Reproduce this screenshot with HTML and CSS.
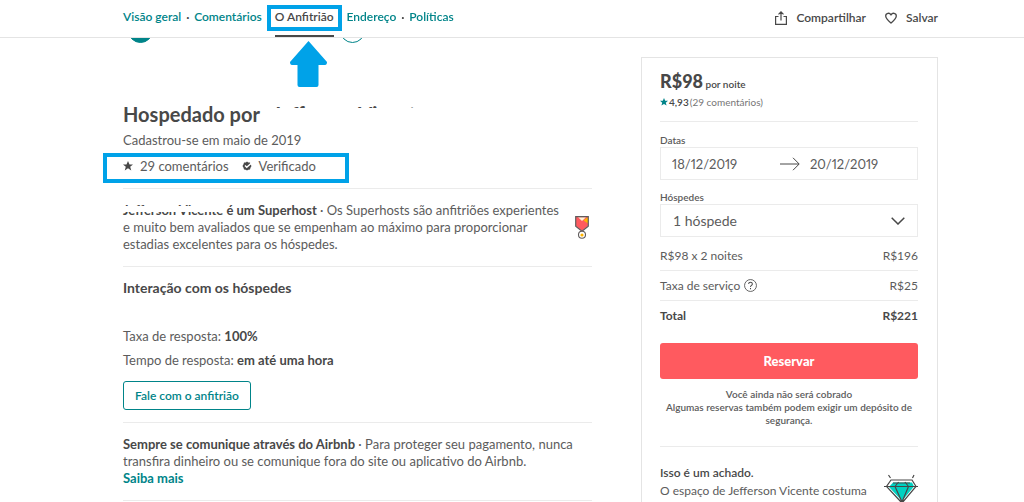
FILE: index.html
```html
<!DOCTYPE html>
<html lang="pt-BR">
<head>
<meta charset="UTF-8">
<meta name="viewport" content="width=device-width,initial-scale=1.0">
<title>O Anfitrião</title>
<link rel="stylesheet" href="styles.css">
</head>
<body>

<header class="topbar">
  <nav>
    <ul class="nav">
      <li><a href="#geral">Visão geral</a></li>
      <li><a href="#comentarios">Comentários</a></li>
      <li class="active">
        <a href="#anfitriao">O Anfitrião</a>
        <svg class="arrow" viewBox="0 0 37 46" width="37" height="46"><path d="M18.500 0L37 21q0 3-2 3h-6.500v20q0 2-2 2h-17q-2 0-2-2V24H2q-2 0-2-3z" fill="#00a2e8"/></svg>
      </li>
      <li><a href="#endereco">Endereço</a></li>
      <li><a href="#politicas">Políticas</a></li>
    </ul>
  </nav>
  <div class="actions">
    <button type="button">
      <svg viewBox="0 0 12 14" width="12" height="14" fill="none" stroke="#484848" stroke-width="1.200"><path d="M3.500 5.500H.6v7.900h10.800V5.500H8.500M6 9.500V1M3.500 3.400L6 .9l2.500 2.500"/></svg>
      Compartilhar
    </button>
    <button type="button">
      <svg viewBox="0 0 12 12" width="12" height="12" fill="none" stroke="#484848" stroke-width="1.300" stroke-linejoin="round"><path d="M6 11C3.500 9 .7 6.800.7 4.100.7 1 4.600.200 6 3 7.400.200 11.300 1 11.300 4.100 11.300 6.800 8.500 9 6 11z"/></svg>
      Salvar
    </button>
  </div>
</header>

<div class="page">
  <main class="main">
    <div class="pager">
      <span class="dot full"></span>
      <span class="dot"></span>
    </div>

    <section class="host" id="anfitriao">
      <h2>Hospedado por <span class="name">Jefferson Vicente</span></h2>
      <p class="since">Cadastrou-se em maio de 2019</p>
      <div class="badges">
        <span>
          <svg viewBox="0 0 20 20" width="10" height="10"><path d="M10 0l3 7h7l-5.600 4.700L16.500 19 10 14.700 3.500 19l2.100-7.300L0 7h7z" fill="#484848"/></svg>
          29 comentários
        </span>
        <span>
          <svg viewBox="0 0 20 20" width="10" height="10"><path d="M10 1l2.500 2L16 3l1 3.500L19 10l-2 3.500L16 17l-3.500.300L10 19l-2.500-1.700L4 17l-1-3.500L1 10l2-3.500L4 3l3.500 0z" fill="#484848"/><path d="M6 9l3.500 3.500L19 4" fill="none" stroke="#fff" stroke-width="2.800"/></svg>
          Verificado
        </span>
      </div>
    </section>

    <section class="superhost">
      <p><b><span class="name">Jefferson Vicente</span> é um Superhost</b> · Os Superhosts são anfitriões experientes e muito bem avaliados que se empenham ao máximo para proporcionar estadias excelentes para os hóspedes.</p>
      <svg viewBox="0 0 14 23" width="14" height="23">
        <path d="M1 1h12v9l-6 5-6-5z" fill="#ff5a5f"/>
        <path d="M13 1v6.500L8.500 4.500z" fill="#ffb400"/>
        <path d="M3 1.200h8L7 5z" fill="#fff3d6"/>
        <path d="M.7.7h12.600v9.500L7 15.200.7 10.200z" fill="none" stroke="#605b5b" stroke-width="1.200"/>
        <circle cx="7" cy="18.800" r="3.500" fill="#fff" stroke="#605b5b" stroke-width="1.100"/>
        <circle cx="7" cy="19" r="1.600" fill="#ffb400"/>
      </svg>
    </section>

    <section class="contact">
      <h3>Interação com os hóspedes</h3>
      <p>Taxa de resposta: <b>100%</b></p>
      <p>Tempo de resposta: <b>em até uma hora</b></p>
      <button type="button" class="btn-line">Fale com o anfitrião</button>
    </section>

    <section class="safety">
      <p><b>Sempre se comunique através do Airbnb</b> · Para proteger seu pagamento, nunca transfira dinheiro ou se comunique fora do site ou aplicativo do Airbnb.</p>
      <a href="#saiba-mais">Saiba mais</a>
    </section>
  </main>

  <aside class="card">
    <div class="price"><strong>R$98</strong> por noite</div>
    <div class="rating">
      <svg viewBox="0 0 20 20" width="8" height="8"><path d="M10 0l3 7h7l-5.600 4.700L16.500 19 10 14.700 3.500 19l2.100-7.300L0 7h7z" fill="#008489"/></svg>
      <b>4,93</b> <span>(29 comentários)</span>
    </div>

    <form class="booking">
      <label for="checkin">Datas</label>
      <div class="dates">
        <input type="text" id="checkin" value="18/12/2019">
        <svg viewBox="0 0 20 14" width="20" height="14" fill="none" stroke="#484848"><path d="M0 7h19M13 .8L19.200 7 13 13.200"/></svg>
        <input type="text" id="checkout" aria-label="Checkout" value="20/12/2019">
      </div>
      <label for="guests">Hóspedes</label>
      <div class="guests">
        <select id="guests"><option>1 hóspede</option></select>
        <svg viewBox="0 0 14 8" width="14" height="8" fill="none" stroke="#484848" stroke-width="1.500"><path d="M.7.7L7 7l6.300-6.300"/></svg>
      </div>

      <dl class="costs">
        <div><dt>R$98 x 2 noites</dt><dd>R$196</dd></div>
        <div>
          <dt>Taxa de serviço
            <svg viewBox="0 0 14 14" width="13" height="13" fill="none" stroke="#484848"><circle cx="7" cy="7" r="6.400" stroke-width=".9"/><path d="M5 5.500c0-2.600 4-2.600 4 0C9 7 7 6.900 7 8.600M7 9.800v1.200" stroke-width="1.100"/></svg>
          </dt>
          <dd>R$25</dd>
        </div>
        <div class="total"><dt>Total</dt><dd>R$221</dd></div>
      </dl>

      <button type="submit" class="btn-book">Reservar</button>
    </form>
    <p class="note">Você ainda não será cobrado<br>Algumas reservas também podem exigir um depósito de segurança.</p>

    <div class="find">
      <div>
        <b>Isso é um achado.</b>
        <p>O espaço de Jefferson Vicente costuma</p>
      </div>
      <svg viewBox="0 0 34 30" width="34" height="30">
        <path d="M7 6h21l4 6.500L18 29 2.500 12.500z" fill="#fff"/>
        <path d="M9 8.500h19l2 4L18 27 5 13z" fill="#00d1c1"/>
        <path d="M7 6h21l4 6.500L18 29 2.500 12.500zM0 12.500h34M11 12.500L18 28l6.500-15.500M11 12.500l3.500-4.500M24.500 12.500L21 8M9 9h17M6.500 4L4.500 1M28.500 4l1.500-3" fill="none" stroke="#484848" stroke-width="1.200"/>
      </svg>
    </div>
  </aside>
</div>

</body>
</html>
```
FILE: styles.css
```css
*, *:before, *:after{ margin: 0; padding: 0; box-sizing: border-box; }
body{ background: #fff; color: #5c5c5c; font: 13px/18px Lato, "Liberation Sans", sans-serif; }
a{ color: #008489; text-decoration: none; }
h2, h3, b, strong{ color: #484848; }
button, input, select{ font: inherit; color: inherit; background: none; border: 0; }
button{ cursor: pointer; }
svg{ display: block; flex: none; }

.topbar{
  position: fixed; top: 0; left: 0; right: 0; z-index: 2; height: 38px;
  display: flex; justify-content: space-between; padding: 0 86px 0 123px;
  background: #fff; border-bottom: 1px solid #e4e4e4; color: #484848;
  font-size: 12px; font-weight: 600;
}
.nav{ display: flex; list-style: none; line-height: 34px; }
.nav li{ position: relative; height: 37px; }
.nav li + li{ margin-left: 13px; }
.nav li + li:before{ content: "·"; position: absolute; left: -8px; }
.nav .active{ border-bottom: 2px solid #484848; }
.nav .active a{ color: #484848; }
/* destaque azul em volta do item */
.nav .active:after{ content: ""; position: absolute; top: 5px; left: -8px; right: -8px; height: 26px; border: 4px solid #00a2e8; pointer-events: none; }
.nav .active:before, .nav .active + li:before{ display: none; }
.arrow{ position: absolute; top: 41px; left: 50%; margin-left: -14px; }
.actions{ display: flex; gap: 19px; }
.actions button{ display: flex; align-items: center; gap: 9px; height: 35px; }

.page{ display: flex; align-items: flex-start; justify-content: space-between; gap: 49px; padding: 18px 86px 0 123px; }
.main{ flex: 1; min-width: 0; }
.pager{ display: flex; gap: 187px; padding-left: 5px; }
.dot{ width: 25px; height: 25px; border: 1px solid #008489; border-radius: 50%; }
.dot.full{ background: #008489; }

.main section{ border-bottom: 1px solid #ebebeb; }
.host{ padding: 59px 0 5px; }
.host h2{ font-size: 20px; line-height: 24px; }
.since{ padding: 5px 0 4px; }
.badges{ display: flex; gap: 13px; width: 246px; height: 30px; margin-left: -20px; padding: 0 16px; border: 4px solid #00a2e8; }
.badges span{ display: flex; align-items: center; gap: 7px; height: 18px; }
/* nomes cobertos */
.name{ position: relative; }
.name:after{ content: ""; position: absolute; left: -2px; right: -2px; background: #fff; }
.host .name{ margin-left: 8px; }
.host .name:after{ top: 6px; bottom: -2px; }
.superhost .name:after{ top: 4px; height: 6px; }

.superhost{ display: flex; gap: 10px; padding: 13px 0; line-height: 17px; }
.superhost p{ flex: 1; }
.superhost svg{ margin: 14px 3px 0 0; }
.contact{ padding: 12px 0; }
.contact h3{ font-size: 14px; margin-bottom: 30px; }
.contact p{ margin-bottom: 6px; }
.btn-line{ height: 29px; margin-top: 6px; padding: 0 11px; border: 1px solid #008489; border-radius: 3px; color: #008489; font-size: 12px; font-weight: 600; }
.safety{ padding: 13px 0; line-height: 17px; }
.safety a{ font-weight: 700; }

.card{ width: 297px; flex: none; margin-top: 39px; padding: 13px 19px 13px 18px; border: 1px solid #e4e4e4; font-size: 12px; }
.price{ color: #484848; font-size: 10px; font-weight: 600; line-height: 20px; }
.price strong{ font-size: 18px; }
.rating{ display: flex; align-items: center; gap: 1px; height: 28px; padding-bottom: 12px; margin-bottom: 12px; font-size: 10px; border-bottom: 1px solid #ebebeb; }
.rating b{ font-weight: 600; }
.rating span{ color: #767676; }
.booking label{ display: block; font-size: 10px; font-weight: 600; line-height: 12px; }
.dates, .guests{ display: flex; align-items: center; height: 33px; border: 1px solid #ebebeb; }
.dates{ gap: 32px; margin: 1px 0 11px; padding: 0 11px; }
.dates input{ width: 76px; font-size: 13px; font-variant-numeric: proportional-nums; }
.dates svg + input{ margin-left: -22px; }
.guests{ position: relative; margin-top: 1px; font-size: 14px; }
.guests select{ width: 100%; height: 100%; padding: 0 12px; appearance: none; }
.guests svg{ position: absolute; right: 12px; pointer-events: none; }
.costs{ padding-top: 4px; }
.costs div{ display: flex; justify-content: space-between; align-items: center; height: 30px; border-bottom: 1px solid #ebebeb; }
.costs dt{ display: flex; align-items: center; gap: 4px; }
.costs .total{ border: 0; color: #484848; font-weight: 700; }
.btn-book{ display: block; width: 100%; height: 36px; margin-top: 12px; border-radius: 3px; background: #ff5a5f; color: #fff; font-size: 13px; font-weight: 900; }
.note{ margin-top: 9px; padding-bottom: 19px; border-bottom: 1px solid #ebebeb; font-size: 10px; font-weight: 600; line-height: 13px; text-align: center; }
.find{ display: flex; justify-content: space-between; padding-top: 17px; }
.find b{ font-weight: 600; }
.find svg{ margin-top: 10px; }
```
